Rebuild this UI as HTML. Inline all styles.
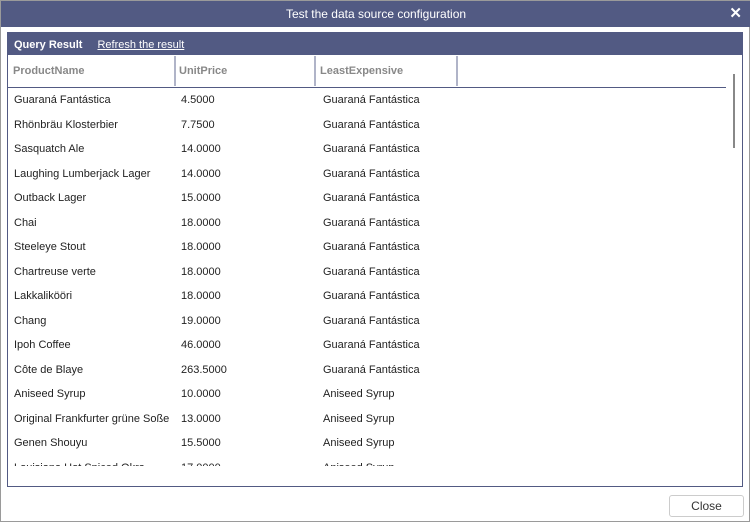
<!DOCTYPE html>
<html><head><style>
body{margin:0;width:750px;height:522px;background:#fff;font-family:"Liberation Sans",sans-serif;position:relative;overflow:hidden;border:1px solid #9a9a9a;box-sizing:border-box}
.title{position:absolute;left:0;top:0;width:750px;height:26px;background:#525a83;color:#fff;font-size:12px;text-align:center;line-height:26px}
.x{position:absolute;right:9px;top:0;font-size:15px;font-weight:bold}
.panel{position:absolute;left:6px;top:31px;width:736px;height:455px;border:1px solid #525a83;box-sizing:border-box}
.hb{height:22px;background:#525a83;color:#fff;font-size:11px;line-height:24px;padding-left:6px}
.hb b{margin-right:15px}
.hb u{font-weight:normal}
.cols{position:absolute;top:23px;left:0;height:31px;width:718px;border-bottom:1px solid #525a83;font-size:11px;font-weight:bold;color:#888}
.cols div{position:absolute;top:0;height:30px;line-height:30px;padding-left:5px;border-right:2px solid #b0b4c8;box-sizing:border-box}
.rows{position:absolute;top:55px;left:0;width:718px;height:378px;overflow:hidden;font-size:11px;color:#222}
.r{position:absolute;height:16px;line-height:16px}
.sb{position:absolute;left:725px;top:41px;width:2px;height:74px;background:#888}
.btn{position:absolute;left:668px;top:494px;width:75px;height:22px;border:1px solid #ccc;border-radius:3px;box-sizing:border-box;font-size:12px;text-align:center;line-height:20px;color:#333}
</style></head><body>
<div class="title">Test the data source configuration<span class="x">✕</span></div>
<div class="panel">
<div class="hb"><b>Query Result</b><u>Refresh the result</u></div>
<div class="cols"><div style="left:0;width:168px">ProductName</div><div style="left:166px;width:142px">UnitPrice</div><div style="left:307px;width:143px">LeastExpensive</div></div>
<div class="sb"></div>
<div class="rows" id="rows"></div>
</div>
<div class="btn">Close</div>
<script>
var d=[["Guaraná Fantástica","4.5000","Guaraná Fantástica"],["Rhönbräu Klosterbier","7.7500","Guaraná Fantástica"],["Sasquatch Ale","14.0000","Guaraná Fantástica"],["Laughing Lumberjack Lager","14.0000","Guaraná Fantástica"],["Outback Lager","15.0000","Guaraná Fantástica"],["Chai","18.0000","Guaraná Fantástica"],["Steeleye Stout","18.0000","Guaraná Fantástica"],["Chartreuse verte","18.0000","Guaraná Fantástica"],["Lakkalikööri","18.0000","Guaraná Fantástica"],["Chang","19.0000","Guaraná Fantástica"],["Ipoh Coffee","46.0000","Guaraná Fantástica"],["Côte de Blaye","263.5000","Guaraná Fantástica"],["Aniseed Syrup","10.0000","Aniseed Syrup"],["Original Frankfurter grüne Soße","13.0000","Aniseed Syrup"],["Genen Shouyu","15.5000","Aniseed Syrup"],["Louisiana Hot Spiced Okra","17.0000","Aniseed Syrup"]];
var h="";d.forEach(function(r,i){var t=4+i*24.5;h+='<div class="r" style="left:6px;top:'+t+'px">'+r[0]+'</div><div class="r" style="left:173px;top:'+t+'px">'+r[1]+'</div><div class="r" style="left:315px;top:'+t+'px">'+r[2]+'</div>';});
document.getElementById("rows").innerHTML=h;
</script>
</body></html>
